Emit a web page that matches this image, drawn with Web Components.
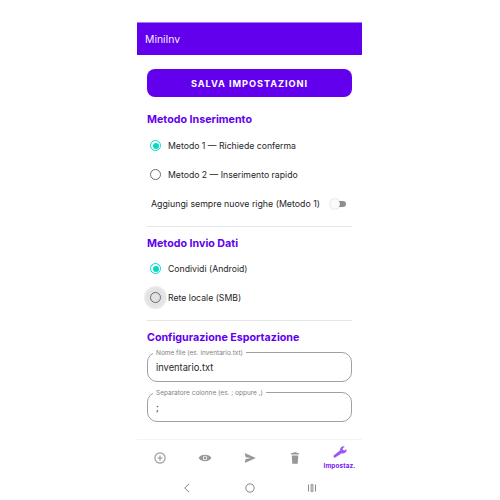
<!DOCTYPE html>
<html>
<head>
<meta charset="utf-8">
<style>
html, body { margin: 0; padding: 0; background: #fff; }
body { width: 500px; height: 500px; overflow: hidden; font-family: "Inter", "Noto Sans", sans-serif; }
</style>
</head>
<body>
<mini-app></mini-app>
<script>
(function () {

    class AppBar extends HTMLElement {
        constructor() {
            super();
            this.attachShadow({ mode: 'open' });
            this.shadowRoot.innerHTML =
                '<style>:host { display: flex; align-items: center; box-sizing: border-box; height: 33px; padding: 1px 0 0 8px; background: #6200ee; color: #f4ecff; font-size: 10.4px; font-weight: 400; border-top: 1px solid #a678f2; }</style><slot></slot>';
        }
    }
    customElements.define('app-bar', AppBar);

    class SaveButton extends HTMLElement {
        constructor() {
            super();
            this.attachShadow({ mode: 'open' });
            this.shadowRoot.innerHTML =
                '<style>:host { display: flex; align-items: center; justify-content: center; height: 28px; border-radius: 8px; background: #6200ee; color: #fff; font-size: 9.2px; font-weight: 700; letter-spacing: .95px; }</style><slot></slot>';
        }
    }
    customElements.define('save-button', SaveButton);

    class SectionTitle extends HTMLElement {
        constructor() {
            super();
            this.attachShadow({ mode: 'open' });
            this.shadowRoot.innerHTML =
                '<style>:host { display: block; color: #6200ee; font-size: 10.7px; font-weight: 700; line-height: 14px; }</style><slot></slot>';
        }
    }
    customElements.define('section-title', SectionTitle);

    class RadioRow extends HTMLElement {
        constructor() {
            super();
            this.attachShadow({ mode: 'open' });
            var on = this.hasAttribute('checked');
            var ripple = this.hasAttribute('ripple');
            this.shadowRoot.innerHTML =
                '<style>' +
                ':host { display: flex; align-items: center; height: 29px; color: #262626; font-size: 8.7px; }' +
                '.box { position: relative; width: 11px; height: 11px; margin: 0 7px 0 3px; }' +
                '.ring { box-sizing: border-box; position: absolute; inset: 0; border-radius: 50%; border: 1px solid #6b6b6b; }' +
                '.on .ring { border-color: #03dac5; }' +
                '.on .ring::after { content: ""; position: absolute; inset: 1.5px; border-radius: 50%; background: #03dac5; }' +
                '.halo { position: absolute; inset: -6px; border-radius: 50%; background: radial-gradient(circle, #e2e2e2 50%, #f1f1f1 80%, #fff 100%); }' +
                '</style>' +
                '<span class="box ' + (on ? 'on' : '') + '">' + (ripple ? '<span class="halo"></span>' : '') + '<span class="ring"></span></span><slot></slot>';
        }
    }
    customElements.define('radio-row', RadioRow);

    class SwitchRow extends HTMLElement {
        constructor() {
            super();
            this.attachShadow({ mode: 'open' });
            this.shadowRoot.innerHTML =
                '<style>' +
                ':host { display: flex; align-items: center; justify-content: space-between; height: 29px; padding: 0 6px 0 4px; color: #262626; font-size: 8.8px; }' +
                '.track { position: relative; width: 15px; height: 6px; border-radius: 3px; background: #8f8f8f; }' +
                '.thumb { position: absolute; left: -1px; top: -2px; width: 10px; height: 10px; border-radius: 50%; background: #fafafa; box-shadow: 0 0 1.5px rgba(0,0,0,.3); }' +
                '</style><span><slot></slot></span><span class="track"><span class="thumb"></span></span>';
        }
    }
    customElements.define('switch-row', SwitchRow);

    class OutlinedField extends HTMLElement {
        constructor() {
            super();
            this.attachShadow({ mode: 'open' });
            this.shadowRoot.innerHTML =
                '<style>' +
                ':host { display: block; position: relative; box-sizing: border-box; height: 30px; border: 1px solid #a0a0a0; border-radius: 10px; padding: 8px 8px 0; color: #2a2a2a; font-size: 9.3px; line-height: 14px; }' +
                '.label { position: absolute; left: 5px; top: -4px; padding: 0 3px; background: #fff; color: #808080; font-size: 6.5px; line-height: 8px; white-space: nowrap; }' +
                '</style><span class="label"></span><slot></slot>';
            this.shadowRoot.querySelector('.label').textContent = this.getAttribute('label');
        }
    }
    customElements.define('outlined-field', OutlinedField);

    const tabIcons = {
        add: '<circle cx="12" cy="12" r="8.8" fill="none" stroke="currentColor" stroke-width="2"/><path d="M12 7.5v9M7.5 12h9" fill="none" stroke="currentColor" stroke-width="2"/>',
        eye: '<path fill-rule="evenodd" d="M12 6.5C7 6.5 3 8.6 1 12c2 3.4 6 5.5 11 5.5s9-2.1 11-5.5c-2-3.4-6-5.5-11-5.5zm0 9.3a3.8 3.8 0 1 1 0-7.6 3.8 3.8 0 0 1 0 7.6z" fill="currentColor"/><circle cx="12" cy="12" r="2.4" fill="currentColor"/>',
        send: '<path d="M3 3.5 22 12 3 20.5l1.6-7L14 12l-9.4-1.5z" fill="currentColor"/>',
        trash: '<path d="M9.8 2h4.4l.8 1.6h3.6v2.6H5.4V3.6H9zM6.4 7.6h11.2l-1 14.4H7.4z" fill="currentColor"/>',
        wrench: '<path d="M23 5.6l-3.8 2.2-2.5-1.500.1-2.900 3.600-2.100a6 6 0 0 0-6.600 1 5.300 5.300 0 0 0-1.300 5L1.600 16a2.300 2.300 0 0 0 2.400 3.800l10.800-7.300a6 6 0 0 0 5.700-.8A5.400 5.400 0 0 0 23 5.600z" fill="currentColor"/>'
    };

    class TabItem extends HTMLElement {
        constructor() {
            super();
            this.attachShadow({ mode: 'open' });
            this.shadowRoot.innerHTML =
                '<style>' +
                ':host { flex: 1; display: flex; flex-direction: column; align-items: center; justify-content: center; color: #979797; }' +
                ':host([active]) { color: #9a55f5; }' +
                'svg { width: 14px; height: 14px; display: block; }' +
                '.text { color: #7a22f2; font-size: 6.4px; font-weight: 700; line-height: 8px; margin-top: 2px; letter-spacing: .1px; }' +
                '</style><svg viewBox="0 0 24 24">' + tabIcons[this.getAttribute('icon')] + '</svg>' +
                (this.hasAttribute('active') ? '<span class="text"><slot></slot></span>' : '');
        }
    }
    customElements.define('tab-item', TabItem);

    class NavBar extends HTMLElement {
        constructor() {
            super();
            this.attachShadow({ mode: 'open' });
            this.shadowRoot.innerHTML =
                '<style>' +
                ':host { display: flex; height: 25px; justify-content: center; gap: 48.5px; align-items: center; color: #777; }' +
                'svg { width: 14px; height: 14px; display: block; fill: none; stroke: currentColor; stroke-width: 1.5; }' +
                '</style>' +
                '<svg viewBox="0 0 24 24"><path d="M15.5 5 8 12l7.5 7"/></svg>' +
                '<svg viewBox="0 0 24 24"><circle cx="12" cy="12" r="7"/></svg>' +
                '<svg viewBox="0 0 24 24"><path d="M6 6v12M18 6v12M10.5 6h3v12h-3z"/></svg>';
        }
    }
    customElements.define('nav-bar', NavBar);

    class MiniApp extends HTMLElement {
        constructor() {
            super();
            this.attachShadow({ mode: 'open' });
            this.shadowRoot.innerHTML =
                '<style>' +
                ':host { display: flex; flex-direction: column; box-sizing: border-box; width: 225px; height: 478px; margin: 22px 0 0 137px; background: #fff; }' +
                '.content { flex: 1; min-height: 0; padding: 14px 10px 0; }' +
                '.section { padding-bottom: 8px; border-bottom: 1px solid #e6e6e6; margin-bottom: 10px; }' +
                '.section.first { margin-top: 16px; }' +
                '.section.last { border: 0; margin: 0; padding: 0; }' +
                '.rows { margin-top: 4px; }' +
                '.rows.tight { margin-top: 3px; }' +
                '.fields { display: flex; flex-direction: column; gap: 10px; margin-top: 7px; }' +
                '.tabs { display: flex; height: 36px; box-sizing: border-box; border-top: 1px solid #f4f4f4; }' +
                '</style>' +
                '<app-bar>MiniInv</app-bar>' +
                '<div class="content">' +
                '<save-button>SALVA IMPOSTAZIONI</save-button>' +
                '<div class="section first"><section-title>Metodo Inserimento</section-title><div class="rows">' +
                '<radio-row checked>Metodo 1 — Richiede conferma</radio-row>' +
                '<radio-row>Metodo 2 — Inserimento rapido</radio-row>' +
                '<switch-row>Aggiungi sempre nuove righe (Metodo 1)</switch-row>' +
                '</div></div>' +
                '<div class="section"><section-title>Metodo Invio Dati</section-title><div class="rows tight">' +
                '<radio-row checked>Condividi (Android)</radio-row>' +
                '<radio-row ripple>Rete locale (SMB)</radio-row>' +
                '</div></div>' +
                '<div class="section last"><section-title>Configurazione Esportazione</section-title><div class="fields">' +
                '<outlined-field label="Nome file (es. inventario.txt)">inventario.txt</outlined-field>' +
                '<outlined-field label="Separatore colonne (es. ; oppure ,)">;</outlined-field>' +
                '</div></div>' +
                '</div>' +
                '<div class="tabs">' +
                '<tab-item icon="add"></tab-item><tab-item icon="eye"></tab-item><tab-item icon="send"></tab-item><tab-item icon="trash"></tab-item>' +
                '<tab-item icon="wrench" active>Impostaz.</tab-item>' +
                '</div>' +
                '<nav-bar></nav-bar>';
        }
    }
    customElements.define('mini-app', MiniApp);

})();
</script>
</body>
</html>
